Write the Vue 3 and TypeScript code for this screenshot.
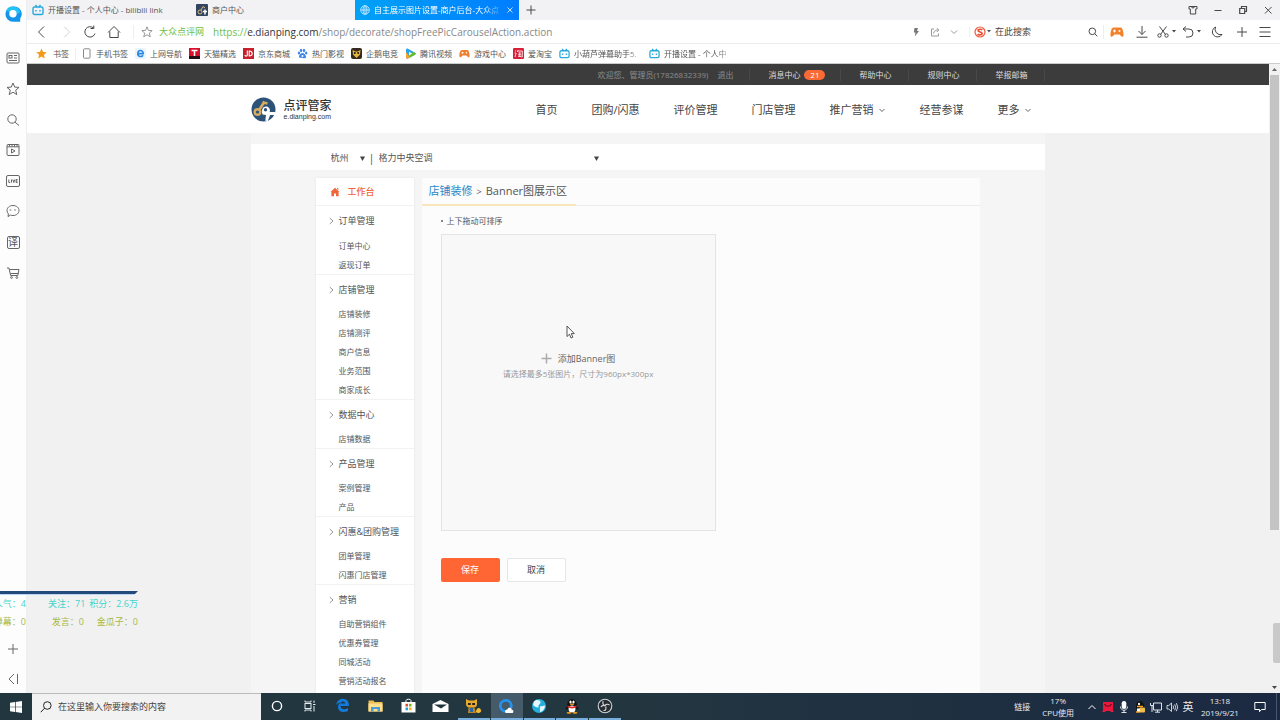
<script setup lang="ts">
import { ref } from 'vue'

interface MenuGroup {
  title: string
  items: string[]
}

const menu: MenuGroup[] = [
  { title: '订单管理', items: ['订单中心', '返现订单'] },
  { title: '店铺管理', items: ['店铺装修', '店铺测评', '商户信息', '业务范围', '商家成长'] },
  { title: '数据中心', items: ['店铺数据'] },
  { title: '产品管理', items: ['案例管理', '产品'] },
  { title: '闪惠&团购管理', items: ['团单管理', '闪惠门店管理'] },
  { title: '营销', items: ['自助营销组件', '优惠券管理', '同城活动', '营销活动报名'] },
]

const nav: { label: string; more?: boolean }[] = [
  { label: '首页' },
  { label: '团购/闪惠' },
  { label: '评价管理' },
  { label: '门店管理' },
  { label: '推广营销', more: true },
  { label: '经营参谋' },
  { label: '更多', more: true },
]

const topLinks: string[] = ['帮助中心', '规则中心', '举报邮箱']

const bookmarks: { icon: string; label: string; fade?: boolean }[] = [
  { icon: 'ie', label: '上网导航' },
  { icon: 'tmall', label: '天猫精选' },
  { icon: 'jd', label: '京东商城' },
  { icon: 'paw', label: '热门影视' },
  { icon: 'owl', label: '企鹅电竞' },
  { icon: 'play', label: '腾讯视频' },
  { icon: 'pad', label: '游戏中心' },
  { icon: 'tao', label: '爱淘宝' },
  { icon: 'tv', label: '小葫芦弹幕助手5.', fade: true },
  { icon: 'tv', label: '开播设置 - 个人中', fade: true },
]

const city = ref('杭州')
const shop = ref('格力中央空调')
const keyword = ref('')
const query = ref('')
</script>

<template>
  <div class="desktop">
    <div class="browser">
      <aside class="rail">
        <button class="brand" aria-label="QQ浏览器">
          <svg width="18" height="18" viewBox="0 0 18 18">
            <path d="M9 1.5a7.6 7.6 0 1 0 0 15.2h7.2v-3.2A7.6 7.6 0 0 0 9 1.5z" fill="#1495ea" />
            <path d="M2 6a7.6 7.6 0 0 1 14.3 1.600L13 9A4 4 0 0 0 6 7z" fill="#20c3f7" />
            <circle cx="9" cy="8.800" r="3.700" fill="#fff" />
          </svg>
        </button>
        <div class="rail-list">
          <button aria-label="资讯">
            <svg class="ln" width="14" height="14" viewBox="0 0 14 14"><rect x="1" y="2" width="12" height="10" rx="1" /><rect x="3" y="4.500" width="3" height="2.500" /><path d="M8 4.500h3M8 7h3M3 9.500h8" /></svg>
          </button>
          <button aria-label="收藏">
            <svg class="ln" width="14" height="14" viewBox="0 0 14 14"><path d="M7 1l1.700 4.100 4.300.3-3.300 2.800 1.100 4.400L7 10.200l-3.800 2.400 1.100-4.400L1 5.400l4.300-.3z" /></svg>
          </button>
          <button aria-label="搜索">
            <svg class="ln" width="14" height="14" viewBox="0 0 14 14"><circle cx="6" cy="6" r="4.200" /><path d="M9 9.200l4 3.300" /></svg>
          </button>
          <button aria-label="视频">
            <svg class="ln" width="14" height="14" viewBox="0 0 14 14"><rect x="1" y="1.500" width="12" height="11" rx="1" /><path d="M1 3.800h12M3.500 1.500v2M6 1.500v2M8.500 1.500v2M11 1.500v2M5.500 6l3.500 2-3.500 2z" /></svg>
          </button>
          <button aria-label="直播">
            <svg class="ln" width="14" height="14" viewBox="0 0 14 14"><rect x="0.500" y="1.500" width="13" height="11" rx="1.500" /><path d="M2.800 5.500v3h1.400M5.500 5.500v3M6.800 5.500l1 3 1-3M11.600 5.500h-1.500v3h1.500M10.100 7h1.300" /></svg>
          </button>
          <button aria-label="消息">
            <svg class="ln" width="14" height="14" viewBox="0 0 14 14"><path d="M7 1.500c3.500 0 6 2.200 6 5s-2.500 5-6 5c-.9 0-1.800-.1-2.500-.4L2 12.500l.4-2.600C1.500 9 1 7.800 1 6.500c0-2.800 2.500-5 6-5z" /><path d="M4.500 5.500v1M9 5.500v1" stroke-width="1.500" /></svg>
          </button>
          <button aria-label="翻译"><span class="yi">译</span></button>
          <button aria-label="购物">
            <svg class="ln" width="14" height="14" viewBox="0 0 14 14"><path d="M1 2h2l1.600 7.500h7.200L13 3.500H3.500M4.500 7.500h7.800" /><circle cx="5.500" cy="11.500" r="0.900" /><circle cx="10.800" cy="11.500" r="0.900" /></svg>
          </button>
        </div>
        <div class="rail-foot">
          <button aria-label="添加"><svg class="ln" width="12" height="12" viewBox="0 0 12 12"><path d="M6 1v10M1 6h10" /></svg></button>
          <button aria-label="收起"><svg class="ln" width="12" height="12" viewBox="0 0 12 12"><path d="M7 1L2 6l5 5M10.500 1v10" /></svg></button>
        </div>
      </aside>

      <div class="window">
        <div class="tabs">
          <button class="tab">
            <svg width="12" height="12" viewBox="0 0 12 12" fill="none" stroke="#2aa9dc" stroke-width="1.400"><rect x="1" y="3" width="10" height="7.500" rx="1.500" /><path d="M3.500 1l1.500 2M8.500 1L7 3M4 6v1.500M8 6v1.500" /></svg>
            <span>开播设置 - 个人中心 - bilibili link</span>
          </button>
          <button class="tab">
            <svg width="12" height="12" viewBox="0 0 12 12"><rect width="12" height="12" rx="1" fill="#34465f" /><circle cx="4" cy="8" r="2" fill="none" stroke="#d5b77b" /><path d="M5 6l2-3.500 2 1.500" stroke="#d5b77b" fill="none" /><path d="M7 7.500h4M9 5.500v5" stroke="#fff" stroke-width="1.500" /></svg>
            <span>商户中心</span>
          </button>
          <button class="tab on">
            <svg width="10" height="10" viewBox="0 0 10 10" fill="none" stroke="#d8efff" stroke-width="0.800"><circle cx="5" cy="5" r="4.300" /><ellipse cx="5" cy="5" rx="2" ry="4.300" /><path d="M.7 5h8.600M5 .7v8.600" /></svg>
            <span class="fade">自主展示图片设置-商户后台-大众点</span>
            <svg class="x" width="6" height="6" viewBox="0 0 6 6" stroke="#d8efff" stroke-width="0.900"><path d="M.5.5l5 5M5.500.5l-5 5" /></svg>
          </button>
          <button class="newtab" aria-label="新标签页"><svg class="ln dark" width="10" height="10" viewBox="0 0 10 10"><path d="M5 .5v9M.5 5h9" /></svg></button>
          <div class="winctl">
            <button aria-label="皮肤"><svg class="ln dark" width="10" height="10" viewBox="0 0 10 10"><path d="M1 1.500h8v2.500H7.700V9H2.300V4H1zM3.500 1.500a1.500 1.500 0 0 0 3 0" /></svg></button>
            <button aria-label="最小化"><svg class="ln dark" width="10" height="10" viewBox="0 0 10 10"><path d="M1.500 5.500h7" /></svg></button>
            <button aria-label="还原"><svg class="ln dark" width="10" height="10" viewBox="0 0 10 10"><path d="M1.700 3.500h5v5h-5zM3.500 3.500v-2h5v5h-1.800" stroke-width="1.200" /></svg></button>
            <button aria-label="关闭"><svg class="ln dark" width="10" height="10" viewBox="0 0 10 10"><path d="M2 2l6.500 6.500M8.500 2L2 8.500" /></svg></button>
          </div>
        </div>

        <div class="address">
          <div class="navbtns">
            <button aria-label="后退"><svg class="ln dark" width="12" height="14" viewBox="0 0 12 14"><path d="M8 1.500L2.500 7 8 12.500" /></svg></button>
            <button aria-label="前进"><svg class="ln pale" width="12" height="14" viewBox="0 0 12 14"><path d="M4 1.500L9.500 7 4 12.500" /></svg></button>
            <button aria-label="刷新"><svg class="ln dark" width="14" height="14" viewBox="0 0 14 14"><path d="M12 8.500A5.200 5.200 0 1 1 10.500 3M10.800.5v3H7.500" /></svg></button>
            <button aria-label="主页"><svg class="ln dark" width="14" height="14" viewBox="0 0 14 14"><path d="M1 7.500L7 1.500l6 6M2.800 6.500v6h8.400v-6" /></svg></button>
          </div>
          <svg class="ln star" width="12" height="12" viewBox="0 0 14 14"><path d="M7 1l1.700 4.100 4.300.3-3.300 2.800 1.100 4.400L7 10.200l-3.800 2.400 1.100-4.400L1 5.400l4.300-.3z" /></svg>
          <span class="site">大众点评网</span>
          <span class="url"><i>https://</i><b>e.dianping.com</b>/shop/decorate/shopFreePicCarouselAction.action</span>
          <div class="urltools">
            <svg width="8" height="10" viewBox="0 0 8 10" fill="#777"><path d="M2.500 1H6L5 4h2L2.800 9.500l.7-4H1.800z" /></svg>
            <svg class="ln mid" width="10" height="10" viewBox="0 0 10 10"><path d="M4 2H1.500v7h7V6.500M3.500 6.500C4 4 5.500 3 8.500 3M6.800 1l2 2-2 2" /></svg>
            <svg class="ln mid" width="8" height="8" viewBox="0 0 8 8"><path d="M1 2.500L4 5.500l3-3" /></svg>
          </div>
          <label class="search">
            <svg width="12" height="12" viewBox="0 0 12 12"><circle cx="6" cy="6" r="5" fill="#fff" stroke="#ee5a3d" stroke-width="1.200" /><path d="M8.200 4C7.500 3 4 2.900 4 4.600S8.200 5.900 8.200 7.600 4.500 9.200 3.700 8" fill="none" stroke="#ee4a2d" stroke-width="1.600" /></svg>
            <svg class="tri" width="4" height="3" viewBox="0 0 4 3"><path d="M0 0h4L2 2.500z" fill="#555" /></svg>
            <input v-model="keyword" type="text" placeholder="在此搜索" aria-label="在此搜索">
            <svg class="ln dark" width="10" height="10" viewBox="0 0 10 10"><circle cx="4.300" cy="4.300" r="3.300" /><path d="M6.800 6.800l2.500 2.500" /></svg>
          </label>
          <div class="tools">
            <button class="w25" aria-label="游戏"><svg width="14" height="12" viewBox="0 0 14 12"><path d="M3.500 1.500h7C12.500 1.500 13.700 6 13.500 9.500c-.2 1.800-1.800 1.500-2.500.5L9.500 8.500h-5L3 10c-.7 1-2.300 1.300-2.500-.5C.3 6 1.500 1.500 3.500 1.500z" fill="#f2812a" /><path d="M4.500 3.500v3M3 5h3" stroke="#fff" /><circle cx="9.500" cy="5" r="1" fill="#fff" /></svg></button>
            <button class="w25" aria-label="下载"><svg class="ln dark" width="12" height="12" viewBox="0 0 12 12"><path d="M6 0v8.500M2.500 5L6 8.500 9.500 5M.5 11.200h11" /></svg></button>
            <button class="w25" aria-label="截图"><svg class="ln dark" width="12" height="12" viewBox="0 0 12 12"><path d="M2.500.5l6 8M9.500.5l-6 8" /><circle cx="2.500" cy="9.500" r="1.700" /><circle cx="9.500" cy="9.500" r="1.700" /></svg><svg width="4" height="3" viewBox="0 0 4 3"><path d="M0 0h4L2 2.500z" fill="#444" /></svg></button>
            <button class="w25" aria-label="恢复"><svg class="ln dark" width="12" height="12" viewBox="0 0 12 12"><path d="M4 .5L1 3l3 2.500M1 3h6a3.800 3.800 0 0 1 0 8H4" /></svg><svg width="4" height="3" viewBox="0 0 4 3"><path d="M0 0h4L2 2.500z" fill="#444" /></svg></button>
            <button class="w25" aria-label="夜间"><svg class="ln dark" width="12" height="12" viewBox="0 0 12 12"><path d="M4.500 1A5.200 5.200 0 1 0 11 8.500 5.500 5.500 0 0 1 4.500 1z" /></svg></button>
            <button class="w25" aria-label="添加"><svg class="ln dark" width="12" height="12" viewBox="0 0 12 12"><path d="M6 1v10M1 6h10" /></svg></button>
            <button class="w25 menu" aria-label="菜单"><svg class="ln dark" width="12" height="12" viewBox="0 0 12 12"><path d="M.5 1.500h11M.5 6h11M.5 10.500h11" /></svg></button>
          </div>
        </div>

        <div class="bookmarks">
          <a class="mark first" href="#">
            <svg width="11" height="11" viewBox="0 0 14 14"><path d="M7 .5l2 4.500 4.700.4-3.600 3.200 1.100 4.700L7 10.800l-4.200 2.500 1.100-4.700L.3 5.400 5 5z" fill="#f39a1d" /></svg>
            <span>书签</span>
          </a>
          <a class="mark" href="#">
            <svg width="11" height="11" viewBox="0 0 11 11"><rect x="2.500" y=".8" width="6.500" height="9.400" rx="1" fill="#fff" stroke="#888" /></svg>
            <span>手机书签</span>
          </a>
          <a v-for="(b, i) in bookmarks" :key="i" class="mark" :class="{ long: b.fade }" href="#">
            <svg v-if="b.icon === 'ie'" width="11" height="11" viewBox="0 0 11 11"><rect width="11" height="11" rx="2" fill="#eaf4fd" /><path d="M2.800 5.600h5.400C8.200 1.300 2.800 1.500 2.800 5.500c0 3.600 4 3.700 5.200 1.800" fill="none" stroke="#2a86e0" stroke-width="1.600" /></svg>
            <svg v-else-if="b.icon === 'tmall'" width="11" height="11" viewBox="0 0 11 11"><rect width="11" height="11" fill="#d8102d" /><rect y="8" width="11" height="3" fill="#241016" /><path d="M2.500 2.500h6M5.500 2.500V8" stroke="#fff" stroke-width="1.500" /></svg>
            <svg v-else-if="b.icon === 'jd'" width="11" height="11" viewBox="0 0 11 11"><rect width="11" height="11" fill="#c81f2c" /><path d="M4.300 2.500v4.700c0 1.200-2.300 1.200-2.500 0M6.200 3v5c4 0 4-5 0-5z" fill="none" stroke="#fff" stroke-width="1.100" /></svg>
            <svg v-else-if="b.icon === 'paw'" width="11" height="11" viewBox="0 0 11 11" fill="#3d86e8"><ellipse cx="2" cy="5" rx="1.200" ry="1.600" /><ellipse cx="4" cy="2.500" rx="1.200" ry="1.700" /><ellipse cx="7" cy="2.500" rx="1.200" ry="1.700" /><ellipse cx="9.200" cy="5" rx="1.200" ry="1.600" /><path d="M5.500 5c1.500 0 3.500 2 3.500 3.700S7.500 10.500 5.500 10 2 10.500 2 8.700 4 5 5.500 5z" /><circle cx="5.500" cy="8" r="1" fill="#fff" /></svg>
            <svg v-else-if="b.icon === 'owl'" width="11" height="11" viewBox="0 0 11 11"><rect width="11" height="11" rx="2" fill="#352a1c" /><path d="M1.500 2l3 1.500h2l3-1.500-.5 4.500-3.500 3.500L2 6.500z" fill="#e5b63f" /><circle cx="3.800" cy="5" r="1" fill="#201610" /><circle cx="7.200" cy="5" r="1" fill="#201610" /></svg>
            <svg v-else-if="b.icon === 'play'" width="11" height="11" viewBox="0 0 11 11"><path d="M1 1.500C1 .5 2 .3 3 .8l7 4c1 .6 1 1.300 0 1.900l-7 3.800c-1 .4-2 0-2-1z" fill="#28a4ec" /><path d="M1 4v5.500c0 1 1 1.400 2 1L5 9.400 3.500 7z" fill="#f5a12a" /><path d="M10 6.700c1-.6 1-1.300 0-1.900L8.500 4 3.500 7.500 4.500 9.700z" fill="#69bf2d" /><path d="M4 3.800v3.600l3-1.800z" fill="#fff" /></svg>
            <svg v-else-if="b.icon === 'pad'" width="11" height="11" viewBox="0 0 14 12"><path d="M3.500 1.500h7C12.500 1.500 13.700 6 13.500 9.500c-.2 1.800-1.800 1.500-2.500.5L9.500 8.500h-5L3 10c-.7 1-2.300 1.300-2.500-.5C.3 6 1.500 1.500 3.500 1.500z" fill="#ee8130" /><circle cx="4.500" cy="5" r="1.200" fill="#fff" /><circle cx="9.500" cy="5" r="1" fill="#fff" /></svg>
            <svg v-else-if="b.icon === 'tao'" width="11" height="11" viewBox="0 0 11 11"><rect width="11" height="11" rx="1" fill="#d8203a" /><path d="M2 2.500l1 .8M1.600 5h1.500L2 9M5 2L4.300 4M4.800 3h4.500v6h-1M5.500 5h2.500M5 6.800h3.500M6.700 4.500v4M5.200 8.500h3" stroke="#fff" stroke-width=".8" fill="none" /></svg>
            <svg v-else width="11" height="11" viewBox="0 0 12 12" fill="none" stroke="#2aa9dc" stroke-width="1.400"><rect x="1" y="3" width="10" height="7.500" rx="1.500" /><path d="M3.500 1l1.500 2M8.500 1L7 3M4 6v1.500M8 6v1.500" /></svg>
            <span>{{ b.label }}</span>
          </a>
        </div>

        <div class="view">
          <div class="page">
            <div class="topbar">
              <div class="wrap top-inner">
                <span class="hello">欢迎您、管理员(17826832339)</span>
                <a class="quit" href="#">退出</a>
                <a class="toplink msg" href="#">消息中心<em>21</em></a>
                <a v-for="t in topLinks" :key="t" class="toplink" href="#">{{ t }}</a>
              </div>
            </div>
            <header class="header">
              <div class="wrap head-inner">
                <a class="logo" href="#">
                  <svg width="25" height="25" viewBox="0 0 25 25">
                    <circle cx="12.500" cy="12.500" r="12" fill="#2d5278" />
                    <circle cx="6.500" cy="15" r="2.800" fill="none" stroke="#d6ab60" stroke-width="2.400" />
                    <path d="M8.500 12.500L13.500 4.500M11.500 5.200l5 1.300" stroke="#d6ab60" stroke-width="2.600" fill="none" />
                    <path d="M11.500 17.500c-1.500-4.500.500-8 3.500-8s4.500 2.500 3.800 5.500H24.200v3h-5L16.800 24l-2.500-.2.700-5.800z" fill="#fff" />
                    <circle cx="14.500" cy="12.800" r="1.700" fill="#2d5278" />
                  </svg>
                  <span class="logo-text"><strong>点评管家</strong><small>e.dianping.com</small></span>
                </a>
                <nav class="nav">
                  <a v-for="n in nav" :key="n.label" href="#">{{ n.label }}<svg v-if="n.more" class="ln" width="6" height="6" viewBox="0 0 6 6"><path d="M.5 2L3 4.500 5.500 2" /></svg></a>
                </nav>
              </div>
            </header>

            <div class="wrap body">
              <div class="shopbar">
                <label class="pick city">
                  <select v-model="city" aria-label="城市"><option>杭州</option></select>
                  <svg width="5" height="5" viewBox="0 0 5 5"><path d="M0 .5h5L2.500 5z" fill="#444" /></svg>
                </label>
                <span class="bar">|</span>
                <label class="pick shop">
                  <select v-model="shop" aria-label="门店"><option>格力中央空调</option></select>
                  <svg width="5" height="5" viewBox="0 0 5 5"><path d="M0 .5h5L2.500 5z" fill="#444" /></svg>
                </label>
              </div>

              <div class="columns">
                <aside class="side">
                  <a class="work" href="#">
                    <svg width="10" height="10" viewBox="0 0 10 10"><path d="M5 .8L9.500 5H8.600v4.200H6V6.500H4v2.700H1.400V5H.5zM7 1h1.300v2L7 2z" fill="#f1663a" /></svg>
                    工作台
                  </a>
                  <section v-for="g in menu" :key="g.title" class="group">
                    <h3><svg class="ln mid" width="5" height="8" viewBox="0 0 5 8"><path d="M.7 1L4 4 .7 7" /></svg>{{ g.title }}</h3>
                    <a v-for="s in g.items" :key="s" href="#">{{ s }}</a>
                  </section>
                </aside>

                <main class="main">
                  <div class="crumbs"><h2><a href="#">店铺装修</a><span class="gt">&gt;</span>Banner图展示区</h2></div>
                  <div class="content">
                    <p class="note">上下拖动可排序</p>
                    <div class="drop">
                      <button class="add">
                        <svg width="11" height="11" viewBox="0 0 11 11" stroke="#aaa" stroke-width="1.500"><path d="M5.500.5v10M.5 5.500h10" /></svg>
                        添加Banner图
                      </button>
                      <p>请选择最多5张图片，尺寸为960px*300px</p>
                      <svg class="cursor" width="9" height="14" viewBox="0 0 9 14"><path d="M1 1v10.500l2.500-2.300L5 13l1.800-.8L5.300 8.600h3z" fill="#fff" stroke="#444" stroke-width=".9" /></svg>
                    </div>
                    <div class="actions">
                      <button class="save">保存</button>
                      <button class="cancel">取消</button>
                    </div>
                  </div>
                </main>
              </div>
            </div>
          </div>
          <div class="scroll">
            <svg width="7" height="11" viewBox="0 0 7 11"><path d="M1 7h5L3.500 4z" fill="#666" /></svg>
            <div class="track"><div class="thumb"></div></div>
            <svg width="7" height="11" viewBox="0 0 7 11"><path d="M1 4h5L3.500 7z" fill="#444" /></svg>
          </div>
        </div>
      </div>

      <div class="stats">
        <svg width="138" height="5" viewBox="0 0 138 5"><path d="M0 1h138l-3 3H0z" fill="#234a7a" /><path d="M0 4h135l-1 1H0z" fill="#b9d6f5" /></svg>
        <div class="row cyan"><span class="c1">人气：4</span><span class="c2">关注：71</span><span>积分：2.6万</span></div>
        <div class="row olive"><span class="c1">弹幕：0</span><span class="c2">发言：0</span><span>金瓜子：0</span></div>
      </div>
      <div class="handle"></div>
    </div>

    <footer class="taskbar">
      <button class="start" aria-label="开始"><svg width="12" height="12" viewBox="0 0 12 12" fill="#fff"><path d="M0 1.700l5-.7v4.700H0zM5.700.9L12 0v5.700H5.700zM0 6.300h5V11l-5-.7zM5.700 6.300H12V12l-6.300-.9z" /></svg></button>
      <label class="find">
        <svg class="ln black" width="12" height="12" viewBox="0 0 12 12"><circle cx="7.300" cy="4.500" r="3.800" /><path d="M4.600 7.200L.8 11.200" /></svg>
        <input v-model="query" type="text" placeholder="在这里输入你要搜索的内容" aria-label="在这里输入你要搜索的内容">
      </label>
      <div class="apps">
        <button aria-label="Cortana"><svg width="14" height="14" viewBox="0 0 14 14"><circle cx="7" cy="7" r="4.600" fill="none" stroke="#fff" stroke-width="1.400" /></svg></button>
        <button aria-label="任务视图"><svg width="14" height="14" viewBox="0 0 14 14" fill="none" stroke="#e6ebee" stroke-width="1"><rect x="2" y="4.500" width="6" height="5" /><path d="M2 1.500v1.500h6V1.500M2 12.500V11h6v1.500M11 1.500v2.500M11 7v5.500M10 5.500h2.500" /></svg></button>
        <button aria-label="Edge"><svg width="15" height="15" viewBox="0 0 15 15"><path d="M1 7C2 2.500 5 .8 8 .8c4 0 6.200 3 6 7.200H5.500c.3 3.500 4.500 4 7.500 2v3C8 15.500 3 13.500 3 9c0-2.300 1.200-3.700 3-4.500C4.500 4.800 2.500 5 1 7zm4.500-1.500h4.700C10 2.800 6 2.800 5.500 5.500z" fill="#1479d8" /></svg></button>
        <button aria-label="文件资源管理器"><svg width="15" height="14" viewBox="0 0 15 14"><path d="M.5 1.500h5l1 1.500h8v9.500H.5z" fill="#f0bd4f" /><path d="M.5 4.500h14v8H.5z" fill="#ffdf8d" /><path d="M3 12.500V8h9v4.500h-2.500V10h-4v2.500z" fill="#4b9bd8" /></svg></button>
        <button aria-label="商店"><svg width="15" height="15" viewBox="0 0 15 15"><path d="M5 4V2.500C5 .8 10 .8 10 2.500V4" fill="none" stroke="#fff" /><path d="M.5 4h14v10.500H.5z" fill="#fff" /><path d="M4.500 5.800H7v2.700H4.500z" fill="#e34a2c" /><path d="M8 5.800h2.500v2.700H8z" fill="#74b81f" /><path d="M4.500 9.500H7v2.700H4.500z" fill="#1c9de8" /><path d="M8 9.500h2.500v2.700H8z" fill="#f5b614" /></svg></button>
        <button aria-label="邮件"><svg width="17" height="14" viewBox="0 0 17 14"><path d="M.5 5l8-4 8 4v8H.5z" fill="#fff" /><path d="M2 5.500h13L9 9.500z" fill="#22343e" /></svg></button>
        <button class="run" aria-label="游戏助手"><svg width="17" height="16" viewBox="0 0 17 16"><path d="M1 1l3 1.500h5L12 1v5c0 2-1 3-2.500 3.500h-6C2 9 1 8 1 6z" fill="#e7a82b" /><path d="M3 5h2.800v2H3zM7.200 5H10v2H7.200z" fill="#2c2118" /><path d="M3.500 9.500h6l1.500 5.500H3z" fill="#c08423" /><path d="M5 10h3v4H5z" fill="#2867a6" /><path d="M11 13c1-4 4.500-4 5.200 0-1 2.500-4 2.500-5.200 1z" fill="#f0b938" /></svg></button>
        <button class="run on" aria-label="QQ浏览器"><svg width="17" height="16" viewBox="0 0 17 16"><circle cx="7.800" cy="7.800" r="5.500" fill="none" stroke="#2493ef" stroke-width="2.800" /><path d="M7 13.500c0-1.500 1.500-2 2.200-1.700C10 9 13.500 9.500 13.500 11.500c2 0 2.500 2.800 1 3.500H8.500c-1 0-1.500-.7-1.500-1.500z" fill="#fff" /></svg></button>
        <button class="run" aria-label="网络"><svg width="16" height="16" viewBox="0 0 16 16"><circle cx="8" cy="8" r="7" fill="#24b0dc" /><path d="M3 3.500C6 1 9 2 9.500 4S7 6.500 7.500 8.500 4 9 2 7zM9 8.500l5-1c0 3-2 6-5 6.500z" fill="#e5f8ff" /></svg></button>
        <button class="run" aria-label="QQ"><svg width="14" height="16" viewBox="0 0 14 16"><ellipse cx="7" cy="8" rx="5" ry="7" fill="#111" /><path d="M2 8L.3 11.500 2 11zM12 8l1.700 3.500L12 11z" fill="#111" /><ellipse cx="5.500" cy="4" rx="1.100" ry="1.500" fill="#fff" /><ellipse cx="8.500" cy="4" rx="1.100" ry="1.500" fill="#fff" /><ellipse cx="7" cy="11" rx="3.500" ry="3.600" fill="#fff" /><path d="M2.500 7.500c3 1.500 6 1.500 9 0v1.800c-3 1.500-6 1.500-9 0z" fill="#e32a26" /><ellipse cx="7" cy="6.300" rx="2.200" ry=".8" fill="#f5a21d" /><ellipse cx="4" cy="14.800" rx="2.500" ry=".9" fill="#f5a21d" /><ellipse cx="10" cy="14.800" rx="2.500" ry=".9" fill="#f5a21d" /></svg></button>
        <button class="run" aria-label="OBS"><svg width="16" height="16" viewBox="0 0 16 16"><circle cx="8" cy="8" r="6.800" fill="#262c31" stroke="#cfd3d6" stroke-width="1.100" /><path d="M6.200 3.300c-1 2.200.2 4 2 4.300M12.500 7c-2-1.500-4.300-.5-4.500 1M6.500 12.500c2 .2 3-1.300 2.200-4M4 9c.5-1.500 2.500-2 4-1" fill="none" stroke="#cfd3d6" stroke-width="1.200" /></svg></button>
      </div>
      <div class="tray">
        <span class="link">链接</span>
        <span class="cpu">17%<br>CPU使用</span>
        <div class="icons">
          <svg width="16" height="14" viewBox="0 0 16 14" fill="none" stroke="#fff"><path d="M4.500 9L8 5.500 11.500 9" /></svg>
          <svg width="16" height="14" viewBox="0 0 16 14"><path d="M3 2h10v8.500l1 1.500h-3l-1-1H6l-1 1H2l1-1.500z" fill="#e8193d" /><path d="M4.500 4c1.500 3 5.500 3 7 0" fill="none" stroke="#6d0b22" stroke-width="1.200" /></svg>
          <svg width="16" height="14" viewBox="0 0 16 14"><rect x="5.700" y="1" width="4.600" height="8" rx="2.300" fill="#fff" /><path d="M4.500 6.500c0 5 7 5 7 0M8 10v2.500M5.500 12.500h5" fill="none" stroke="#dfe3e8" /></svg>
          <svg width="16" height="14" viewBox="0 0 16 14"><ellipse cx="8" cy="6.500" rx="4" ry="5.500" fill="#111" /><ellipse cx="7" cy="4" rx="1" ry="1.200" fill="#fff" /><path d="M5 6.500h6M4 12h4" stroke="#f5a21d" stroke-width="1.500" /><rect x="7.500" y="7.500" width="5.500" height="5" rx="1" fill="#f2bd48" /><path d="M5 8.500h3v3H5z" fill="#fff" /></svg>
          <svg width="16" height="14" viewBox="0 0 16 14" fill="none" stroke="#dfe3e8"><path d="M5.500 3h8v7h-8zM9.500 10v2M7 12.200h5M2.500 3v2.500h3M4 5.500V12" /></svg>
          <svg width="16" height="14" viewBox="0 0 16 14" fill="none" stroke="#dfe3e8"><path d="M3 5.500h1.800L7.500 3v8.500L4.800 9H3zM9 5.500q1.200 1.700 0 3.500M10.700 4.300q2 3 0 6M12.400 3.200q2.600 4 0 8" stroke-width=".9" /></svg>
          <span>英</span>
        </div>
        <span class="clock">13:18<br>2019/9/21</span>
        <button class="notice" aria-label="通知"><svg width="12" height="12" viewBox="0 0 12 12" fill="none" stroke="#fff"><path d="M.8 1.500h10.400v7H7.500L5.500 10.700V8.500H.8z" /></svg></button>
      </div>
    </footer>
  </div>
</template>

<style>
body {
  margin: 0;
}
</style>

<style scoped>
.desktop {
  height: 100vh;
  display: flex;
  flex-direction: column;
  overflow: hidden;
  background: #fff;
  color: #555;
  font: 8px/12px "Open Sans", "Noto Sans CJK SC", sans-serif;
}
.desktop * {
  box-sizing: border-box;
}
button,
input,
select {
  font: inherit;
  color: inherit;
  border: 0;
  padding: 0;
  margin: 0;
  background: none;
  outline: 0;
}
button {
  display: flex;
  align-items: center;
  justify-content: center;
}
a {
  color: inherit;
  text-decoration: none;
}
h2,
h3,
p {
  margin: 0;
  font-weight: 400;
}
svg {
  flex: none;
  display: block;
}
.ln {
  fill: none;
  stroke: #666;
  stroke-width: 1;
}
.dark {
  stroke: #484848;
}
.mid {
  stroke: #999;
}
.pale {
  stroke: #d4d4d4;
}
.black {
  stroke: #222;
}

.browser {
  position: relative;
  flex: 1;
  min-height: 0;
  display: flex;
}
.rail {
  width: 27px;
  flex: none;
  display: flex;
  flex-direction: column;
  background: #fdfdfd;
  border-right: 1px solid #eee;
}
.rail button {
  width: 100%;
}
.rail .brand {
  height: 28px;
}
.rail-list {
  height: 245px;
  margin-top: 15px;
  display: flex;
  flex-direction: column;
}
.rail-list button {
  flex: 1;
}
.yi {
  width: 13px;
  height: 13px;
  border: 1px solid #666;
  border-radius: 2px;
  font-size: 10px;
  line-height: 11px;
}
.rail-foot {
  margin-top: auto;
  display: grid;
  gap: 1px;
}
.rail-foot button {
  height: 29px;
}

.window {
  flex: 1;
  min-width: 0;
  display: flex;
  flex-direction: column;
}
.tabs {
  flex: none;
  height: 20px;
  display: flex;
  background: #f2f2f4;
}
.tab {
  width: 164px;
  padding: 0 6px 0 5px;
  justify-content: flex-start;
  gap: 4px;
  white-space: nowrap;
}
.tab.on {
  background: linear-gradient(90deg, #00a2f6, #007dff);
  color: #fff;
}
.tab .fade {
  flex: 1;
  text-align: left;
  mask-image: linear-gradient(90deg, #000 85%, transparent);
}
.newtab {
  width: 24px;
}
.winctl {
  margin-left: auto;
  display: flex;
}
.winctl button {
  width: 25px;
}
.address {
  flex: none;
  height: 24px;
  display: flex;
  align-items: center;
  border-bottom: 1px solid #ececec;
}
.navbtns {
  display: flex;
  margin-left: 3px;
  padding-right: 7px;
  border-right: 1px solid #eee;
}
.navbtns button {
  width: 24px;
}
.star {
  margin: 0 6px 0 7px;
  stroke: #888;
}
.site {
  color: #6fbf4a;
  font-size: 9px;
}
.url {
  flex: 1;
  min-width: 0;
  margin-left: 9px;
  font-size: 10px;
  line-height: 16px;
  color: #888;
  white-space: nowrap;
  overflow: hidden;
}
.url i {
  font-style: normal;
  color: #6fbf4a;
}
.url b {
  font-weight: 400;
  color: #333;
}
.urltools {
  display: flex;
  align-items: center;
  gap: 10px;
  padding-right: 11px;
  border-right: 1px solid #eee;
}
.search {
  width: 134px;
  padding: 0 5px 0 4px;
  display: flex;
  align-items: center;
  gap: 1px;
  border-right: 1px solid #eee;
}
.search input {
  flex: 1;
  min-width: 0;
  margin-left: 3px;
  font-size: 9px;
  line-height: 14px;
}
input::placeholder {
  color: #444;
  opacity: 1;
}
.tools {
  display: flex;
}
.w25 {
  width: 25px;
  gap: 3px;
}
.tools .menu {
  width: 22px;
  margin-right: 4px;
}
.bookmarks {
  flex: none;
  height: 20px;
  padding-left: 9px;
  display: flex;
  align-items: center;
  gap: 7px;
  white-space: nowrap;
  border-bottom: 1px solid #ccc;
}
.mark {
  display: flex;
  align-items: center;
  gap: 4px;
}
.mark.first {
  gap: 6px;
  padding-right: 6px;
  margin-right: -2px;
  border-right: 1px solid #eee;
}
.mark.long span {
  width: 68px;
  mask-image: linear-gradient(90deg, #000 80%, transparent);
}

.view {
  flex: 1;
  min-height: 0;
  display: flex;
}
.page {
  flex: 1;
  min-width: 0;
  display: flex;
  flex-direction: column;
  overflow: hidden;
  background: #f1f1f1;
}
.wrap {
  width: 64%;
  margin: 0 auto;
}
.topbar {
  flex: none;
  background: #3c3c3c;
  color: #ddd;
}
.top-inner {
  height: 21px;
  display: flex;
  align-items: center;
  justify-content: flex-end;
}
.hello,
.quit {
  color: #8d8d8d;
}
.quit {
  margin: 0 16px 0 9px;
}
.toplink {
  padding: 0 17px 0 18px;
  border-right: 1px solid #484848;
}
.toplink.msg {
  display: flex;
  align-items: center;
  gap: 4px;
  padding-right: 15px;
  border-left: 1px solid #484848;
}
.msg em {
  width: 21px;
  border-radius: 5px;
  background: #fa6a35;
  color: #fff;
  font-style: normal;
  line-height: 10px;
  text-align: center;
}
.header {
  flex: none;
  background: #fff;
}
.head-inner {
  height: 48px;
  display: flex;
  align-items: center;
  justify-content: space-between;
}
.logo {
  display: flex;
  align-items: center;
  gap: 8px;
}
.logo-text {
  display: grid;
  color: #333;
}
.logo-text strong {
  font-size: 12px;
  line-height: 15px;
  font-weight: 500;
}
.logo-text small {
  font: 7px/8px "Liberation Sans", sans-serif;
}
.nav {
  display: flex;
  gap: 34px;
  padding: 1px 14px 0 0;
  font-size: 11px;
  line-height: 16px;
  color: #444;
}
.nav a {
  display: flex;
  align-items: center;
  gap: 6px;
}

.body {
  flex: 1;
  display: flex;
  flex-direction: column;
  padding-top: 11px;
  background: #f5f5f5;
}
.shopbar {
  height: 26px;
  padding: 2px 0 0 80px;
  display: flex;
  align-items: center;
  background: #fff;
  font-size: 9px;
}
.pick {
  display: flex;
  align-items: center;
}
.pick select {
  flex: 1;
  min-width: 0;
  appearance: none;
}
.city {
  width: 34px;
}
.bar {
  width: 14px;
  font-size: 11px;
  text-align: center;
}
.shop {
  width: 220px;
}
.columns {
  flex: 1;
  display: flex;
  gap: 8px;
  margin: 8px 65px 0;
}
.side {
  width: 98px;
  flex: none;
  background: #fff;
  box-shadow: 0 0 2px #e2e2e2;
}
.work {
  height: 28px;
  padding-left: 14px;
  display: flex;
  align-items: center;
  gap: 8px;
  border-bottom: 1px solid #f2f2f2;
  color: #f1663a;
  font-size: 9px;
  font-weight: 500;
}
.group h3 {
  height: 30px;
  padding-left: 13px;
  display: flex;
  align-items: center;
  gap: 5px;
  font-size: 9px;
}
.group + .group h3 {
  border-top: 1px solid #f2f2f2;
}
.group a {
  display: block;
  padding-left: 23px;
  line-height: 19px;
}
.main {
  flex: 1;
  min-width: 0;
  background: #fcfcfc;
}
.crumbs {
  height: 28px;
  display: flex;
  border-bottom: 1px solid #ececec;
}
.crumbs h2 {
  padding: 0 9px 0 7px;
  margin-bottom: -1px;
  font-size: 11px;
  line-height: 26px;
  border-bottom: 2px solid #f9e6bd;
}
.crumbs a {
  color: #2b87c8;
}
.gt {
  margin: 0 4px;
  font-size: 9px;
}
.content {
  padding: 8px 19px 0;
}
.note {
  display: flex;
  align-items: center;
  gap: 4px;
  line-height: 14px;
}
.note::before {
  content: "";
  width: 2px;
  height: 2px;
  background: #888;
}
.drop {
  position: relative;
  width: 275px;
  height: 297px;
  margin-top: 6px;
  display: flex;
  flex-direction: column;
  align-items: center;
  justify-content: center;
  border: 1px solid #e4e4e4;
  background: #f8f8f8;
  color: #999;
}
.add {
  gap: 6px;
  margin-top: -35px;
  padding: 0 0 2px;
  color: #666;
  font-size: 9px;
  line-height: 15px;
}
.drop p {
  line-height: 12px;
}
.cursor {
  position: absolute;
  left: 124px;
  top: 90px;
}
.actions {
  display: flex;
  gap: 7px;
  margin-top: 27px;
  font-size: 9px;
}
.actions button {
  width: 59px;
  height: 24px;
  border-radius: 2px;
}
.save {
  background: #ff6633;
  color: #fff;
}
.actions .cancel {
  background: #fff;
  border: 1px solid #e6e6e6;
  color: #444;
}

.scroll {
  width: 11px;
  flex: none;
  display: flex;
  flex-direction: column;
  align-items: center;
  background: #f1f1f1;
}
.track {
  flex: 1;
  width: 9px;
}
.thumb {
  height: 75%;
  background: #c4c4c4;
}

.stats {
  position: absolute;
  left: 0;
  bottom: 62px;
  width: 138px;
  overflow: hidden;
  font-size: 9px;
  line-height: 18px;
}
.row {
  display: flex;
  justify-content: flex-end;
  white-space: nowrap;
}
.row span {
  flex: none;
}
.row .c1 {
  margin-right: auto;
  width: 26px;
  display: flex;
  justify-content: flex-end;
}
.row .c2 {
  width: 36px;
  text-align: right;
}
.row span + span + span {
  width: 54px;
  text-align: right;
}
.cyan {
  color: #3fd5cc;
}
.olive {
  color: #a8b93f;
}
.handle {
  position: absolute;
  right: 0;
  bottom: 30px;
  width: 7px;
  height: 40px;
  border-radius: 2px 0 0 2px;
  background: #c9c9c9;
}

.taskbar {
  flex: none;
  height: 27px;
  display: flex;
  background: linear-gradient(90deg, #22363f 0%, #233740 45%, #1b2942 100%);
  color: #e8ecf0;
}
.start {
  width: 32px;
}
.find {
  width: 229px;
  padding-left: 8px;
  display: flex;
  align-items: center;
  gap: 6px;
  background: #f2f2f2;
  border-top: 1px solid #bbb;
  color: #333;
}
.find input {
  flex: 1;
  min-width: 0;
  font-size: 9px;
  line-height: 16px;
}
.apps {
  width: 360px;
  display: flex;
  gap: 1px;
}
.apps button {
  flex: 1;
  border-bottom: 2px solid transparent;
}
.apps .run {
  border-bottom-color: #78aede;
}
.apps .on {
  background: #465b6a;
}
.tray {
  margin-left: auto;
  display: flex;
  align-items: center;
  font-size: 8px;
  line-height: 12px;
  text-align: center;
  white-space: nowrap;
}
.cpu {
  margin: 0 10px 0 12px;
}
.icons {
  display: flex;
  align-items: center;
}
.icons span {
  width: 16px;
  font-size: 11px;
  line-height: 14px;
}
.clock {
  width: 48px;
}
.notice {
  width: 33px;
  height: 27px;
  margin-right: 3px;
  border-right: 1px solid #4a566b;
}
</style>
